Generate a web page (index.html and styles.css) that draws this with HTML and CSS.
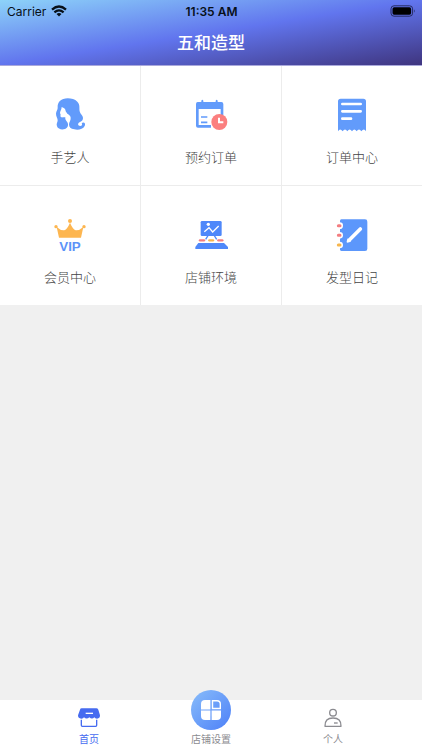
FILE: index.html
```html
<!DOCTYPE html>
<html lang="zh-CN">
<head>
<meta charset="utf-8">
<meta name="viewport" content="width=device-width, initial-scale=1">
<title>五和造型</title>
<link rel="stylesheet" href="styles.css">
</head>
<body>
<header class="header">
  <div class="status">
    <div class="carrier">
      <span>Carrier</span>
      <svg class="wifi" viewBox="0 0 16 12" aria-hidden="true"><g fill="none" stroke="#071018" stroke-width="2.3"><path d="M1 4.6Q8-1.6 15 4.6"/><path d="M3.4 7.4Q8 3.4 12.6 7.4"/></g><path fill="#071018" d="M5.5 9Q8 7 10.500 9L8 11.600z"/></svg>
    </div>
    <time class="clock">11:35 AM</time>
    <svg class="battery" viewBox="0 0 26 12" aria-hidden="true"><rect x="1" y=".8" width="21.600" height="10.400" rx="3" fill="none" stroke="#252b62"/><rect x="2.500" y="2.300" width="18.600" height="7.400" rx="1.600" fill="#000"/><path d="M24 4.200q1.600 1.800 0 3.600z" fill="#252b62"/></svg>
  </div>
  <h1 class="title">五和造型</h1>
</header>
<main class="main">
  <nav class="grid" aria-label="功能">
    <a class="cell" href="#artists">
      <svg class="icon" viewBox="36 21 108 108" aria-hidden="true"><path fill="#629bfb" d="M70 27C82 23 102 25 112 35C121 44 117 54 119 64C121 73 129 76 129 84C129 90 126 93 120 96C112 99 113 108 121 108C126 108 128 103 125 99C132 94 138 100 134 108C129 118 114 121 103 118C92 117 87 112 87 103C87 96 93 91 92 83C92 77 87 74 82 71L77 64C77 57 72 53 65 51C65 59 60 64 60 69L62 74L61 79Q63 83 68 82L76 82C75 89 78 91 81 95C87 103 84 113 75 117C66 120 54 118 51 109C48 101 53 97 53 91C53 84 48 80 48 71C48 64 54 60 53 52C52 40 59 30 70 27z"/></svg>
      <span>手艺人</span>
    </a>
    <a class="cell" href="#bookings">
      <svg class="icon" viewBox="39 21 108 108" aria-hidden="true"><path fill="#629bfb" d="M53 36H64V32Q67 27 70 32V36H107V32Q110 27 113 32V36H124Q130 36 130 42V76H122V57H56V105H93V113H54Q48 113 48 107V42Q48 36 53 36z"/><path d="M63 81H82M63 97H82" stroke="#629bfb" stroke-width="5"/><circle cx="118" cy="96" r="24" fill="#fb7f7f"/><path d="M117 83V97H130" fill="none" stroke="#fff" stroke-width="6"/></svg>
      <span>预约订单</span>
    </a>
    <a class="cell" href="#orders">
      <svg class="icon" viewBox="42 21 108 108" aria-hidden="true"><path fill="#629bfb" d="M62 26H130Q138 26 138 34V124Q132 113 124 124Q117 113 110 124Q103 113 96 124Q89 113 82 124Q75 113 68 124Q60 113 54 124V34Q54 26 62 26z"/><path d="M67 42H122M67 64H122M67 86H93" stroke="#fff" stroke-width="8" stroke-linecap="round"/></svg>
      <span>订单中心</span>
    </a>
    <a class="cell" href="#members">
      <svg class="icon" viewBox="36 21 108 108" aria-hidden="true"><g fill="#fdb650"><path d="M50 51Q62 62 73 61Q82 57 90 38Q98 57 107 61Q118 62 130 51L123 83H57z"/><circle cx="90" cy="33" r="6"/><circle cx="48" cy="50" r="5"/><circle cx="132" cy="50" r="5"/></g><text class="vip" x="90" y="123" text-anchor="middle">VIP</text></svg>
      <span>会员中心</span>
    </a>
    <a class="cell" href="#space">
      <svg class="icon" viewBox="39 21 108 108" aria-hidden="true"><rect x="62" y="33" width="63" height="45" rx="4" fill="#4f88fa"/><path d="M84 77L77 88M103 77L110 88" stroke="#4f88fa" stroke-width="4"/><path d="M73 65L87 53L98 66L116 48" fill="none" stroke="#fff" stroke-width="4"/><circle cx="85" cy="43" r="5" fill="#fff"/><path d="M55 99H132L144 111V117H46V111z" fill="#4f88fa"/><path d="M60 91H72" stroke="#f37d80" stroke-width="7" stroke-linecap="round"/><path d="M88 91H99" stroke="#f7b64d" stroke-width="7" stroke-linecap="round"/><path d="M115 91H127" stroke="#f37d80" stroke-width="7" stroke-linecap="round"/></svg>
      <span>店铺环境</span>
    </a>
    <a class="cell" href="#diary">
      <svg class="icon" viewBox="42 21 108 108" aria-hidden="true"><path fill="#5c97fb" d="M64 28H135Q142 28 142 35V116Q142 123 135 123H64Q60 123 60 118V33Q60 28 64 28z"/><g fill="#fff"><circle cx="59" cy="47" r="10"/><circle cx="59" cy="76" r="10"/><circle cx="59" cy="105" r="10"/></g><g stroke-width="9" stroke-linecap="round"><path d="M55 47H60M55 76H60" stroke="#f37d80"/><path d="M55 105H60" stroke="#f7b64d"/></g><path d="M88 90L121 57" stroke="#fff" stroke-width="11" stroke-linecap="round"/><path fill="#fff" d="M83 85L93 95L82 98Q79 98 80 94z"/></svg>
      <span>发型日记</span>
    </a>
  </nav>
</main>
<nav class="tabs" aria-label="主导航">
  <a class="tab active" href="#home" aria-current="page">
    <svg class="tab-icon" viewBox="51 63 72 72" aria-hidden="true"><path fill="#466bf0" d="M65 70H109Q113 70 115 74L120 91Q120 101 111 101Q105 101 103 97Q96 104 88 97Q80 104 72 97Q70 101 64 101Q54 101 54 91L60 74Q61 70 65 70z"/><path d="M77 85H99" stroke="#fff" stroke-width="4"/><path d="M64 104V121Q64 124 67 124H107Q110 124 110 121V104" fill="none" stroke="#466bf0" stroke-width="4"/></svg>
    <span>首页</span>
  </a>
  <a class="tab" href="#settings">
    <span class="bubble"><svg viewBox="0 0 20 20" aria-hidden="true"><g fill="#fff"><path d="M4 0H9.400V9.400H0V4Q0 0 4 0z"/><path d="M0 10.600H9.400V20H4Q0 20 0 16z"/><path d="M10.600 10.600H20V16Q20 20 16 20H10.600z"/></g><path d="M11.500.7H16Q19.300.7 19.300 4V8.500H11.500z" fill="none" stroke="#fff" stroke-width="1.400"/></svg></span>
    <span>店铺设置</span>
  </a>
  <a class="tab" href="#me">
    <svg class="tab-icon" viewBox="46 63 72 72" aria-hidden="true"><g fill="none" stroke="#8b8b90" stroke-width="4"><circle cx="82" cy="83" r="10"/><path d="M58 124Q57 99 82 99Q107 99 106 124z" stroke-linejoin="round"/><path d="M85 114H96"/></g></svg>
    <span>个人</span>
  </a>
</nav>
</body>
</html>
```
FILE: styles.css
```css
* {
  box-sizing: border-box;
}

body {
  margin: 0;
  min-height: 100vh;
  display: flex;
  flex-direction: column;
  background: #f0f0f0;
  font-family: Inter, "Noto Sans CJK SC", sans-serif;
}

a {
  color: inherit;
  text-decoration: none;
}

svg {
  display: block;
}

.header {
  background: linear-gradient(to bottom right, #8dd3f9, #6175ee 50%, #3f357f);
  border-bottom: 1px solid #aaa9dc;
}

.status {
  display: grid;
  grid-template-columns: 1fr auto 1fr;
  align-items: center;
  height: 22px;
  padding: 0 6px 0 7px;
  font-size: 12px;
  color: #071018;
}

.carrier {
  display: flex;
  align-items: center;
  gap: 5px;
}

.wifi {
  width: 16px;
  height: 12px;
}

.clock {
  font-weight: 600;
}

.battery {
  width: 26px;
  height: 12px;
  justify-self: end;
}

.title {
  margin: 0;
  height: 43px;
  line-height: 43px;
  text-align: center;
  font-size: 17px;
  font-weight: 500;
  color: #fff;
}

.main {
  flex: 1;
}

.grid {
  display: grid;
  grid-template-columns: repeat(3, 1fr);
  gap: 1px;
  background: #ececec;
}

.cell {
  display: flex;
  flex-direction: column;
  align-items: center;
  gap: 14px;
  height: 119px;
  padding-top: 31px;
  background: #fff;
  font-size: 13px;
  font-weight: 300;
  line-height: 20px;
  color: #444;
}

.icon {
  width: 36px;
  height: 36px;
}

.vip {
  font-family: "Liberation Sans", sans-serif;
  font-size: 40px;
  font-weight: 700;
  fill: #5c93f8;
}

.tabs {
  display: flex;
  height: 50px;
  padding: 0 28px;
  background: #fff;
}

.tab {
  flex: 1;
  display: flex;
  flex-direction: column;
  align-items: center;
  justify-content: flex-end;
  gap: 1px;
  padding-bottom: 3px;
  font-size: 10px;
  line-height: 16px;
  color: #8b8b90;
}

.active {
  color: #466bf0;
}

.tab-icon {
  width: 24px;
  height: 24px;
}

.bubble {
  display: grid;
  place-items: center;
  flex: none;
  width: 40px;
  height: 40px;
  border-radius: 50%;
  background: linear-gradient(to bottom right, #89bdfa, #4d80f8);
}

.bubble svg {
  width: 20px;
  height: 20px;
}
```
